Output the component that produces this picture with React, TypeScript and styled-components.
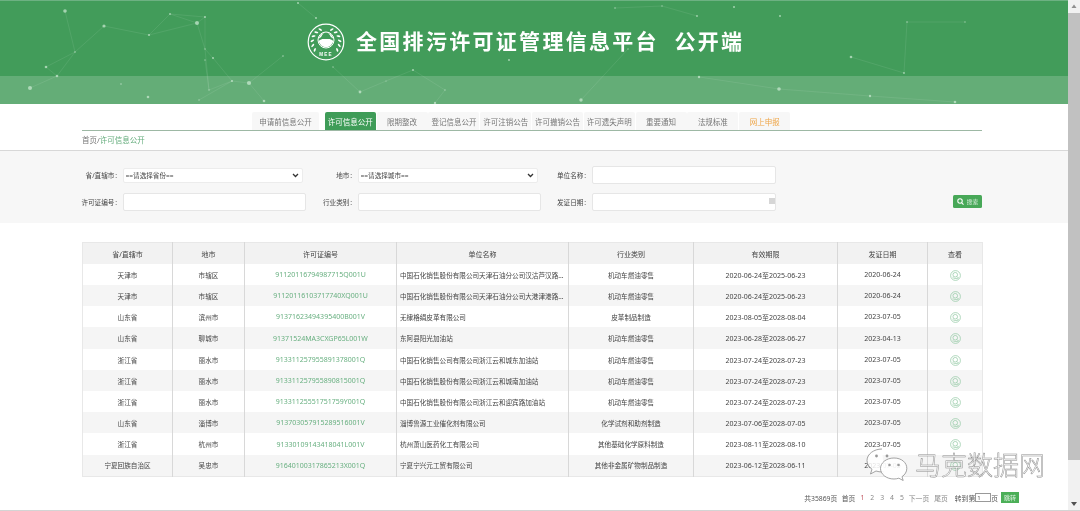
import React from "react";
import styled, { createGlobalStyle } from "styled-components";

const CJK = `"Noto Sans", "Noto Sans CJK SC", sans-serif`;

const chevron = encodeURIComponent(
  `<svg xmlns="http://www.w3.org/2000/svg" width="7" height="5" viewBox="0 0 7 5"><path d="M1 1l2.500 2.500L6 1" fill="none" stroke="#333" stroke-width="1.300"/></svg>`
);

const GlobalStyle = createGlobalStyle`
  html, body {
    margin: 0;
    height: 100%;
    overflow: hidden;
    background: #fff;
  }
  body {
    font-family: ${CJK};
    color: #555;
  }
`;

const Page = styled.div`
  position: relative;
  display: flex;
  width: 1080px;
  height: 511px;
  box-sizing: border-box;
  border-bottom: 1px solid #d4d4d4;
  overflow: hidden;
  filter: blur(0.35px);
`;

const Main = styled.main`
  flex: 1;
  min-width: 0;
`;

const ScrollTrack = styled.aside`
  width: 12px;
  display: flex;
  flex-direction: column;
  align-items: center;
  background: #f1f1f1;
`;

const ScrollArrow = styled.svg`
  width: 12px;
  height: 13px;
  flex: none;
`;

const ScrollThumb = styled.div`
  width: 12px;
  height: 447px;
  background: #c1c1c1;
`;

const ScrollRest = styled.div`
  flex: 1;
`;

const Header = styled.header`
  position: relative;
  height: 104px;
  background: #429c5a;
  border-top: 1px solid #6db182;
  box-sizing: border-box;
`;

const HeaderArt = styled.svg`
  position: absolute;
  inset: 0;
  width: 100%;
  height: 100%;
`;

const Brand = styled.div`
  position: relative;
  height: 75px;
  box-sizing: border-box;
  padding: 6px 0 0 307px;
  display: flex;
  align-items: center;
  gap: 11px;
`;

const Title = styled.h1`
  margin: 0;
  color: #fff;
  font-size: 21px;
  font-weight: 700;
  letter-spacing: 2.3px;
  white-space: pre;
  line-height: 1;
`;

const HeaderBand = styled.div`
  height: 28px;
  background: rgba(255, 255, 255, 0.18);
`;

const Container = styled.div`
  padding: 8px 86px 0 82px;
`;

const Tabs = styled.nav`
  display: flex;
  justify-content: flex-start;
  gap: 0.8px;
  height: 18px;
  padding-left: 170px;
  border-bottom: 1px solid #9db8a4;
`;

const Tab = styled.a<{ $active?: boolean; $wide?: boolean; $accent?: boolean }>`
  width: ${(p) => (p.$wide ? "67px" : "51px")};
  margin-right: ${(p) => (p.$wide ? "5px" : "0")};
  flex: none;
  display: flex;
  align-items: center;
  justify-content: center;
  font-size: 7.5px;
  border-radius: 2px 2px 0 0;
  background: ${(p) => (p.$active ? "#3f9c58" : "#f7f7f7")};
  color: ${(p) => (p.$active ? "#fff" : p.$accent ? "#efa648" : "#777")};
`;

const Breadcrumb = styled.div`
  height: 19px;
  box-sizing: border-box;
  padding-bottom: 2px;
  display: flex;
  align-items: center;
  font-size: 7.5px;
  color: #777;
`;

const Crumb = styled.span`
  color: #64ac7c;
`;

const SearchPanel = styled.section`
  display: flex;
  align-items: flex-end;
  justify-content: space-between;
  padding: 15px 86px 12px 0;
  background: #f7f7f7;
  border-top: 1px solid #d8d8d8;
`;

const FormGrid = styled.div`
  display: grid;
  grid-template-columns: 118px 183px 42px 183px 41px 184px;
  grid-auto-rows: 18px;
  column-gap: 5px;
  row-gap: 9px;
  align-items: center;
`;

const FieldLabel = styled.label`
  margin-right: -3px;
  font-size: 6.6px;
  color: #444;
  text-align: right;
  white-space: nowrap;
`;

const SelectBox = styled.select`
  width: 180px;
  height: 15px;
  padding: 0 0 0 1.500px;
  appearance: none;
  font-family: ${CJK};
  font-size: 6.600px;
  color: #444;
  background: #fff url("data:image/svg+xml,${chevron}") no-repeat right 3px center;
  border: 1px solid #ececec;
  border-radius: 2px;
`;

const TextBox = styled.input`
  display: block;
  width: 100%;
  height: 18px;
  padding: 0;
  box-sizing: border-box;
  background: #fff;
  border: 1px solid #e6e6e6;
  border-radius: 2px;
  outline: none;
`;

const DateField = styled.div`
  position: relative;
`;

const CalendarMark = styled.i`
  position: absolute;
  top: 5px;
  right: 1px;
  width: 6px;
  height: 6px;
  background: #d6d6d6;
`;

const SearchButton = styled.button`
  display: flex;
  align-items: center;
  justify-content: center;
  gap: 3px;
  width: 29px;
  height: 13px;
  margin-bottom: 3px;
  padding: 0;
  border: 0;
  border-radius: 1.5px;
  background: #48a858;
  color: #d8eedd;
  font-family: ${CJK};
  font-size: 5.8px;
`;

const TableWrap = styled.div`
  padding: 19px 86px 0 82px;
`;

const DataTable = styled.table`
  width: 900px;
  table-layout: fixed;
  border-collapse: collapse;
  font-size: 6.6px;
  color: #444;
  border: 1px solid #e8e8e8;
`;

const HeadCell = styled.th`
  height: 21px;
  padding: 0;
  font-weight: 400;
  font-size: 7px;
  background: #f2f2f2;
  border-left: 1px solid #d8d8d8;
  text-align: center;
  &:first-child {
    border-left: 0;
  }
`;

const Row = styled.tr`
  height: 21px;
  &:nth-child(even) {
    background: #f5f5f5;
  }
  &:nth-child(4),
  &:nth-child(9) {
    height: 22px;
  }
`;

const Cell = styled.td<{ $left?: boolean; $number?: boolean; $green?: boolean }>`
  padding: ${(p) => (p.$left ? "0 0 0 3px" : "0")};
  text-align: ${(p) => (p.$left ? "left" : "center")};
  font-size: ${(p) => (p.$number ? "7px" : "6.6px")};
  color: ${(p) => (p.$green ? "#69b081" : "#444")};
  border-left: 1px solid #d8d8d8;
  white-space: nowrap;
  overflow: hidden;
  &:first-child {
    border-left: 0;
  }
`;

const ViewIcon = styled.svg`
  display: block;
  width: 11px;
  height: 11px;
  margin: 1px auto 0;
`;

const Pager = styled.div`
  display: flex;
  align-items: center;
  justify-content: flex-end;
  height: 12px;
  margin: 15px 49px 0 0;
  font-size: 6.8px;
  color: #555;
`;

const PagerItem = styled.span<{ $gap?: number; $current?: boolean; $muted?: boolean }>`
  margin-left: ${(p) => p.$gap ?? 0}px;
  color: ${(p) => (p.$current ? "#c0555f" : p.$muted ? "#888" : "#555")};
  white-space: nowrap;
`;

const PagerInput = styled.input`
  width: 16px;
  height: 9px;
  margin: 0;
  padding: 0 0 0 1px;
  box-sizing: border-box;
  border: 1px solid #999;
  font-size: 6px;
  font-family: ${CJK};
  color: #555;
`;

const JumpButton = styled.button`
  width: 18px;
  height: 11px;
  margin-left: 3px;
  padding: 0;
  border: 0;
  background: #4caf58;
  color: #e4f4e7;
  font-family: ${CJK};
  font-size: 6px;
`;

const Watermark = styled.div`
  position: absolute;
  left: 865px;
  top: 447px;
  display: flex;
  align-items: center;
  gap: 6px;
`;

const WatermarkIcon = styled.svg`
  width: 44px;
  height: 34px;
`;

const WatermarkText = styled.span`
  font-family: "Noto Sans CJK SC", sans-serif;
  font-size: 26px;
  font-weight: 300;
  line-height: 1;
  color: rgba(255, 255, 255, 0.85);
  -webkit-text-stroke: 0.5px #8d8d8d;
`;

type Pt = [number, number, number?];

const points: Pt[] = [
  [65, 10, 1.8], [104, 25, 1.6], [149, 34, 1.1], [170, 13, 0.9], [197, 22, 2], [205, 16, 1],
  [298, 2, 1], [316, 17, 1], [75, 51, 0.8], [46, 66, 1.3], [57, 75, 1.3], [30, 87, 2],
  [121, 83, 0.8], [148, 96, 1.3], [205, 48, 0.7], [213, 57, 1], [205, 59, 0.7], [232, 80, 1.1],
  [249, 82, 2.1], [264, 100, 1.3], [209, 89, 0.7], [199, 99, 0.7], [283, 55, 0.8], [333, 66, 0.7],
  [360, 91, 1.4], [413, 69, 1], [386, 80, 0.6], [445, 89, 0.7], [435, 102, 1.2], [509, 59, 1],
  [615, 7, 0.8], [662, 5, 0.7], [697, 15, 0.9], [734, 6, 1], [780, 15, 1], [907, 21, 0.8],
  [965, 21, 0.7], [851, 56, 1.3], [904, 72, 0.9], [699, 76, 1.2], [779, 88, 1.8], [870, 95, 1.2],
  [955, 101, 1.3], [581, 99, 1.7], [628, 48, 0.7],
];

const links: [number, number][] = [
  [0, 8], [1, 8], [1, 2], [2, 3], [3, 4], [2, 4], [3, 5], [4, 5], [4, 14], [5, 14], [14, 15],
  [15, 17], [14, 20], [20, 17], [17, 18], [18, 19], [21, 17], [16, 20], [8, 9], [9, 10], [8, 10],
  [10, 11], [6, 7], [23, 24], [24, 26], [26, 25], [25, 27], [27, 28], [22, 18], [30, 31], [31, 32],
  [35, 36], [35, 38], [37, 38], [39, 40], [40, 41], [42, 41], [43, 44],
];

const NetworkArt = () => (
  <HeaderArt viewBox="0 0 1068 103" preserveAspectRatio="none">
    {links.map(([a, b], i) => (
      <line
        key={i}
        x1={points[a][0]}
        y1={points[a][1]}
        x2={points[b][0]}
        y2={points[b][1]}
        stroke="#fff"
        strokeOpacity="0.14"
        strokeWidth="0.6"
      />
    ))}
    {points.map(([x, y, r], i) => (
      <circle key={i} cx={x} cy={y} r={r} fill="#d6efdc" fillOpacity="0.65" />
    ))}
  </HeaderArt>
);

const leafAngles = [25, 45, 65, 85, 105, 125];

const Emblem = () => (
  <svg width="38" height="38" viewBox="0 0 38 38" aria-label="MEE">
    <circle cx="19" cy="19" r="17.800" fill="none" stroke="#fff" strokeWidth="1.200" />
    {leafAngles.map((a) => (
      <g key={a}>
        <ellipse cx="19" cy="5.300" rx="0.900" ry="2" fill="#fff" transform={`rotate(${a} 19 19) rotate(35 19 5.300)`} />
        <ellipse cx="19" cy="5.300" rx="0.900" ry="2" fill="#fff" transform={`rotate(${-a} 19 19) rotate(-35 19 5.300)`} />
      </g>
    ))}
    <circle cx="19" cy="17" r="8" fill="#429c5a" stroke="#fff" strokeWidth="1" />
    <path d="M11.800 15.500a7.300 7.300 0 0 1 14.400 0c-1.500-.4-2.600-1.500-3.200-3.200a4.300 4.300 0 0 0-8 0c-.6 1.700-1.700 2.800-3.200 3.200z" fill="#fff" />
    <path d="M11.700 18c1.700-1.400 3.500-1.900 4.300-1.900h6c.8 0 2.600.5 4.300 1.900a7.400 7.400 0 0 1-14.600 0z" fill="#fff" />
    <text x="19" y="32.800" textAnchor="middle" fill="#fff" fontSize="4.600" fontWeight="700" letterSpacing="1.200" fontFamily="Liberation Sans, sans-serif">
      MEE
    </text>
  </svg>
);

const ViewGlyph = () => (
  <ViewIcon viewBox="0 0 22 22" fill="none" stroke="#8fc7a1" strokeWidth="1.400">
    <circle cx="11" cy="11" r="9.800" />
    <circle cx="10.500" cy="9.500" r="4.600" />
    <path d="M5 14.500c2 2.500 8 3.500 12 1.500M14 13l3 3" />
  </ViewIcon>
);

type Permit = {
  province: string;
  city: string;
  code: string;
  company: string;
  industry: string;
  term: string;
  issued: string;
};

const RETAIL = "机动车燃油零售";

const permits: Permit[] = [
  { province: "天津市", city: "市辖区", code: "91120116794987715Q001U", company: "中国石化销售股份有限公司天津石油分公司汉沽芦汉路...", industry: RETAIL, term: "2020-06-24至2025-06-23", issued: "2020-06-24" },
  { province: "天津市", city: "市辖区", code: "91120116103717740XQ001U", company: "中国石化销售股份有限公司天津石油分公司大港津港路...", industry: RETAIL, term: "2020-06-24至2025-06-23", issued: "2020-06-24" },
  { province: "山东省", city: "滨州市", code: "91371623494395400B001V", company: "无棣格绢皮革有限公司", industry: "皮革制品制造", term: "2023-08-05至2028-08-04", issued: "2023-07-05" },
  { province: "山东省", city: "聊城市", code: "91371524MA3CXGP65L001W", company: "东阿县阳光加油站", industry: RETAIL, term: "2023-06-28至2028-06-27", issued: "2023-04-13" },
  { province: "浙江省", city: "丽水市", code: "913311257955891378001Q", company: "中国石化销售公司有限公司浙江云和城东加油站", industry: RETAIL, term: "2023-07-24至2028-07-23", issued: "2023-07-05" },
  { province: "浙江省", city: "丽水市", code: "913311257955890815001Q", company: "中国石化销售股份有限公司浙江云和城南加油站", industry: RETAIL, term: "2023-07-24至2028-07-23", issued: "2023-07-05" },
  { province: "浙江省", city: "丽水市", code: "91331125551751759Y001Q", company: "中国石化销售股份有限公司浙江云和迎宾路加油站", industry: RETAIL, term: "2023-07-24至2028-07-23", issued: "2023-07-05" },
  { province: "山东省", city: "淄博市", code: "913703057915289516001V", company: "淄博鲁源工业催化剂有限公司", industry: "化学试剂和助剂制造", term: "2023-07-06至2028-07-05", issued: "2023-07-05" },
  { province: "浙江省", city: "杭州市", code: "91330109143418041L001V", company: "杭州萧山医药化工有限公司", industry: "其他基础化学原料制造", term: "2023-08-11至2028-08-10", issued: "2023-07-05" },
  { province: "宁夏回族自治区", city: "吴忠市", code: "91640100317865213X001Q", company: "宁夏宁兴元工贸有限公司", industry: "其他非金属矿物制品制造", term: "2023-06-12至2028-06-11", issued: "2023-07-05" },
];

const tabs = ["限期整改", "登记信息公开", "许可注销公告", "许可撤销公告", "许可遗失声明", "重要通知", "法规标准"];
const columns: [string, number][] = [
  ["省/直辖市", 90], ["地市", 72], ["许可证编号", 152], ["单位名称", 172],
  ["行业类别", 125], ["有效期限", 144], ["发证日期", 90], ["查看", 55],
];

export default function App() {
  return (
    <Page>
      <GlobalStyle />
      <Main>
        <Header>
          <NetworkArt />
          <Brand>
            <Emblem />
            <Title>全国排污许可证管理信息平台  公开端</Title>
          </Brand>
          <HeaderBand />
        </Header>

        <Container>
          <Tabs>
            <Tab $wide>申请前信息公开</Tab>
            <Tab $active>许可信息公开</Tab>
            {tabs.map((t) => (
              <Tab key={t}>{t}</Tab>
            ))}
            <Tab $accent>网上申报</Tab>
          </Tabs>
          <Breadcrumb>
            首页/<Crumb>许可信息公开</Crumb>
          </Breadcrumb>
        </Container>

        <SearchPanel>
          <FormGrid>
            <FieldLabel>省/直辖市：</FieldLabel>
            <SelectBox defaultValue="">
              <option value="">==请选择省份==</option>
            </SelectBox>
            <FieldLabel>地市：</FieldLabel>
            <SelectBox defaultValue="">
              <option value="">==请选择城市==</option>
            </SelectBox>
            <FieldLabel>单位名称：</FieldLabel>
            <TextBox />
            <FieldLabel>许可证编号：</FieldLabel>
            <TextBox />
            <FieldLabel>行业类别：</FieldLabel>
            <TextBox />
            <FieldLabel>发证日期：</FieldLabel>
            <DateField>
              <TextBox />
              <CalendarMark />
            </DateField>
          </FormGrid>
          <SearchButton>
            <svg width="7" height="7" viewBox="0 0 10 10" fill="none" stroke="#fff" strokeWidth="1.500">
              <circle cx="4.300" cy="4.300" r="3.200" />
              <path d="M6.800 6.800L9.300 9.300" />
            </svg>
            搜索
          </SearchButton>
        </SearchPanel>

        <TableWrap>
          <DataTable>
            <colgroup>
              {columns.map(([name, width]) => (
                <col key={name} width={width} />
              ))}
            </colgroup>
            <thead>
              <tr>
                {columns.map(([name]) => (
                  <HeadCell key={name}>{name}</HeadCell>
                ))}
              </tr>
            </thead>
            <tbody>
              {permits.map((p) => (
                <Row key={p.code}>
                  <Cell>{p.province}</Cell>
                  <Cell>{p.city}</Cell>
                  <Cell $number $green>{p.code}</Cell>
                  <Cell $left>{p.company}</Cell>
                  <Cell>{p.industry}</Cell>
                  <Cell $number>{p.term}</Cell>
                  <Cell $number>{p.issued}</Cell>
                  <Cell><ViewGlyph /></Cell>
                </Row>
              ))}
            </tbody>
          </DataTable>
        </TableWrap>

        <Pager>
          <PagerItem>共35869页</PagerItem>
          <PagerItem $gap={4.5}>首页</PagerItem>
          <PagerItem $gap={5} $current>1</PagerItem>
          <PagerItem $gap={6} $muted>2</PagerItem>
          <PagerItem $gap={6} $muted>3</PagerItem>
          <PagerItem $gap={6} $muted>4</PagerItem>
          <PagerItem $gap={6} $muted>5</PagerItem>
          <PagerItem $gap={5} $muted>下一页</PagerItem>
          <PagerItem $gap={5} $muted>尾页</PagerItem>
          <PagerItem $gap={7}>转到第</PagerItem>
          <PagerInput defaultValue="1" />
          <PagerItem>页</PagerItem>
          <JumpButton>跳转</JumpButton>
        </Pager>
      </Main>

      <ScrollTrack>
        <ScrollArrow viewBox="0 0 12 13">
          <path d="M6 4.500L8.500 8H3.500z" fill="#8f8f8f" />
        </ScrollArrow>
        <ScrollThumb />
        <ScrollRest />
        <ScrollArrow viewBox="0 0 12 13">
          <path d="M3 5h6L6 9z" fill="#505050" />
        </ScrollArrow>
      </ScrollTrack>

      <Watermark>
        <WatermarkIcon viewBox="0 0 44 34">
          <path
            d="M17 2C9 2 2 7 2 13.500c0 3.600 2 6.500 5 8.700L5.500 27l5.500-3c2 .6 4 1 6 1 .8 0 1.500 0 2.200-.1"
            fill="rgba(255,255,255,0.85)"
            stroke="#8d8d8d"
            strokeWidth="0.8"
          />
          <path
            d="M29 11c-7.700 0-13.500 4.800-13.500 10.500S21.300 32 29 32c1.700 0 3.300-.3 4.800-.8l4.400 2.300-1.200-3.800c3-2 4.800-4.900 4.800-8.200C42 15.800 36.700 11 29 11z"
            fill="rgba(255,255,255,0.9)"
            stroke="#8d8d8d"
            strokeWidth="0.8"
          />
          <circle cx="11.500" cy="9" r="1.400" fill="#999" />
          <circle cx="22" cy="9" r="1.400" fill="#999" />
          <circle cx="24.500" cy="18" r="1.300" fill="#999" />
          <circle cx="33.500" cy="18" r="1.300" fill="#999" />
        </WatermarkIcon>
        <WatermarkText>马克数据网</WatermarkText>
      </Watermark>
    </Page>
  );
}
